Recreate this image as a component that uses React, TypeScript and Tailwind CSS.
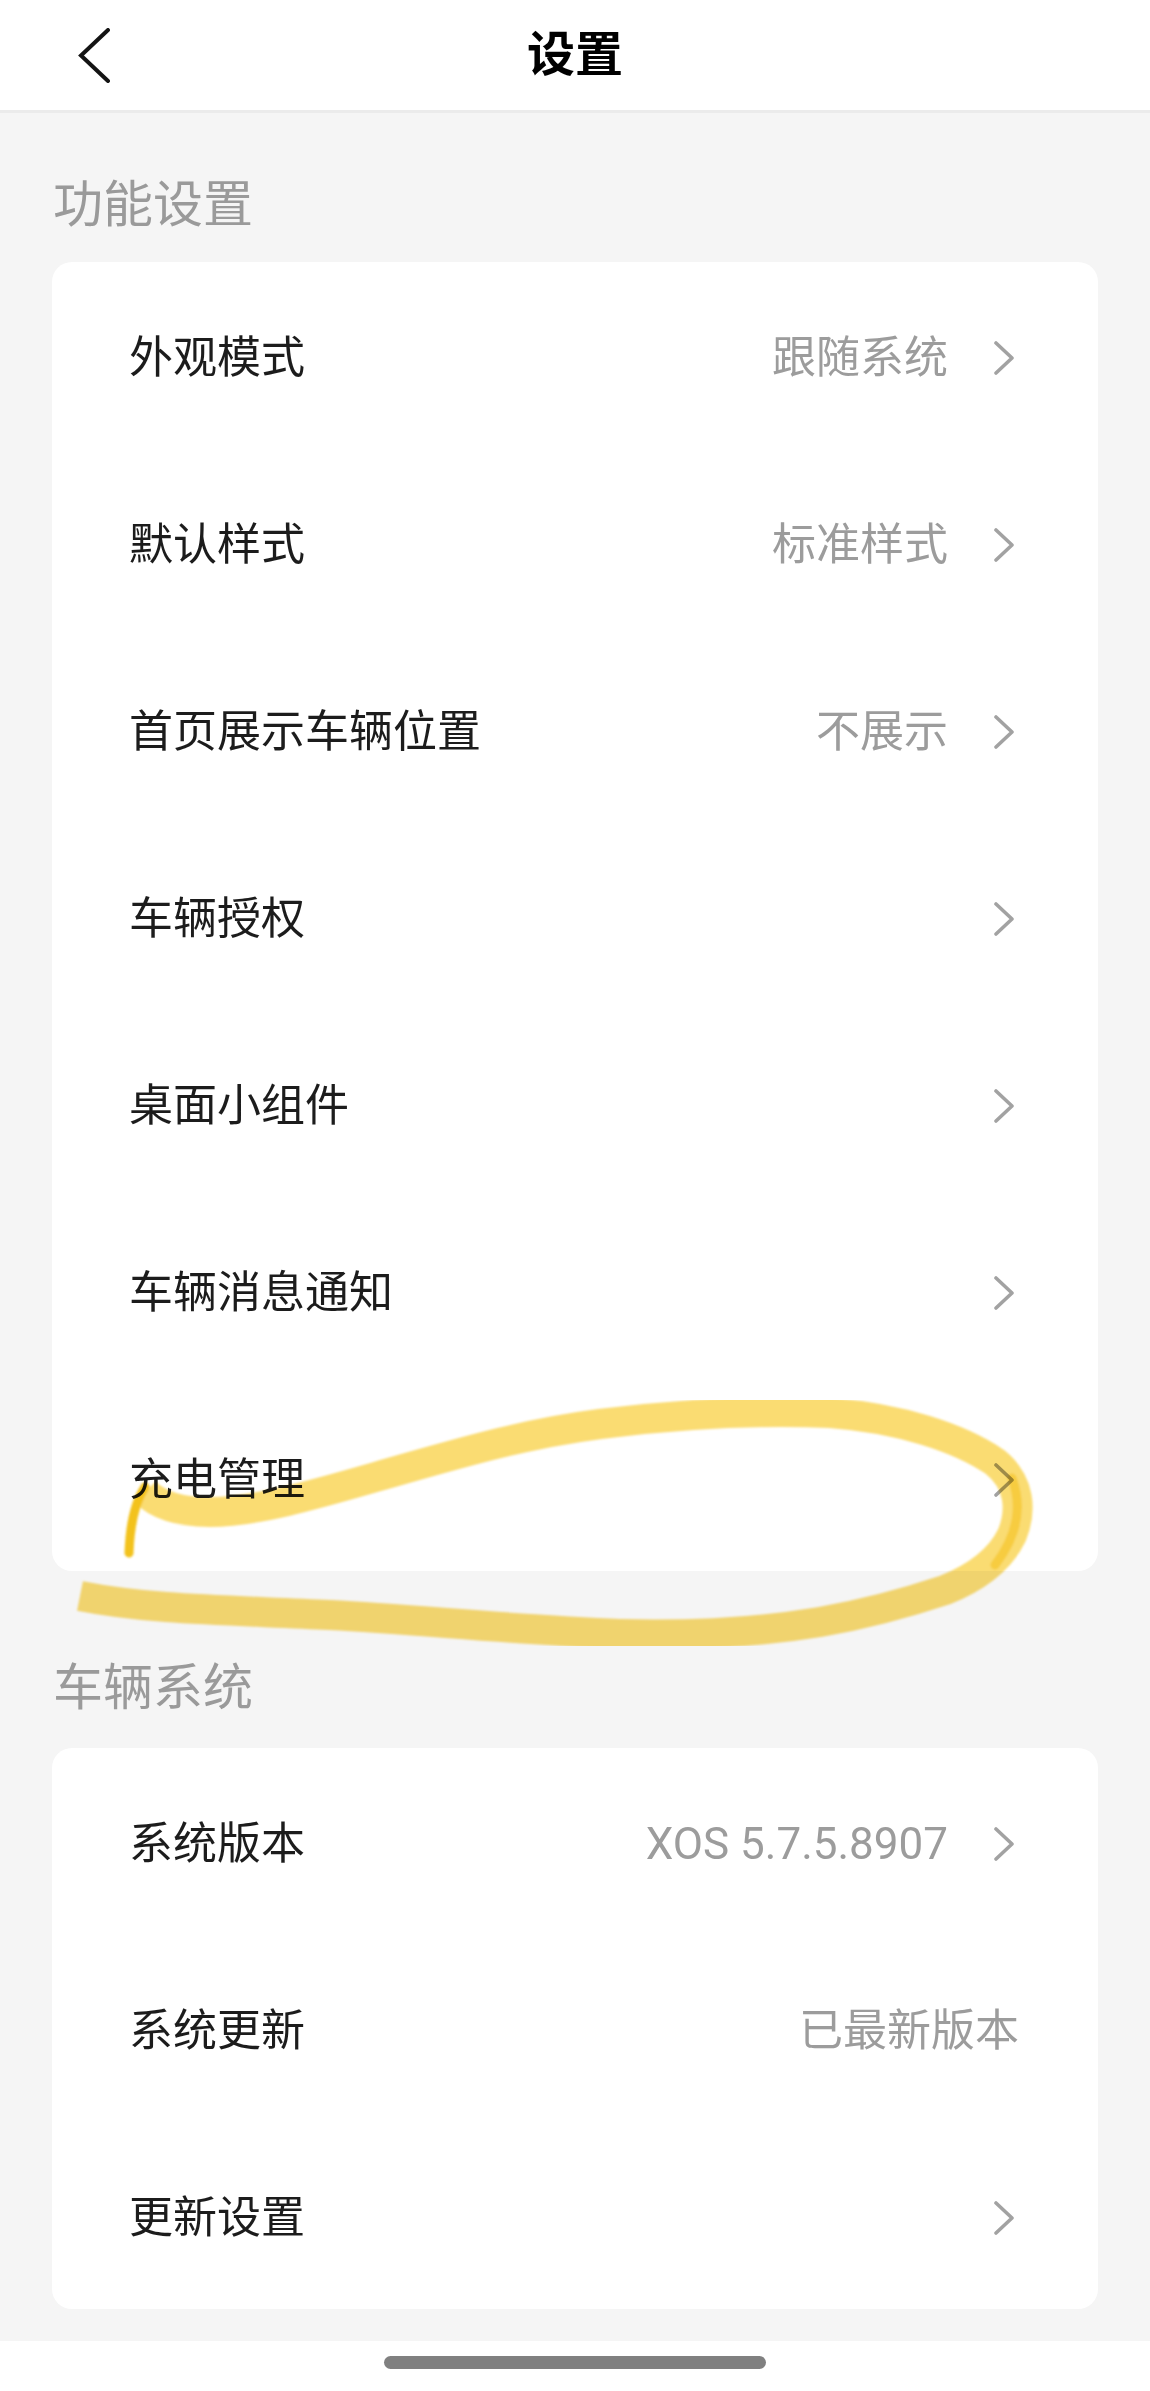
import React from 'react';

type Row = { label: string; value?: string; arrow?: boolean };

const featureRows: Row[] = [
  { label: '外观模式', value: '跟随系统', arrow: true },
  { label: '默认样式', value: '标准样式', arrow: true },
  { label: '首页展示车辆位置', value: '不展示', arrow: true },
  { label: '车辆授权', arrow: true },
  { label: '桌面小组件', arrow: true },
  { label: '车辆消息通知', arrow: true },
  { label: '充电管理', arrow: true },
];

const systemRows: Row[] = [
  { label: '系统版本', value: 'XOS 5.7.5.8907', arrow: true },
  { label: '系统更新', value: '已最新版本' },
  { label: '更新设置', arrow: true },
];

const Chevron = () => (
  <svg width="22" height="34" viewBox="0 0 22 34" className="ml-[45px] shrink-0">
    <path d="M3 2 L19 17 L3 32" fill="none" stroke="#a2a2a2" strokeWidth="3.6" strokeLinecap="round" strokeLinejoin="round" />
  </svg>
);

const SettingRow = ({ row }: { row: Row }) => (
  <div className="flex items-center h-[187px] pt-[5px] pl-[77px] pr-[83px]">
    <span className="flex-1 text-[44px] leading-[50px] text-[#1c1c1c]">{row.label}</span>
    {row.value && (
      <span className={`text-[44px] leading-[50px] text-[#9c9c9c] ${row.arrow ? '' : '-mr-[4px]'}`}>
        {row.value}
      </span>
    )}
    {row.arrow && <Chevron />}
  </div>
);

export default function App() {
  return (
    <div className="relative w-[1150px] min-h-[2391px] bg-[#f5f5f5] font-['Roboto','Noto_Sans_CJK_SC',sans-serif] flex flex-col">
      {/* Header */}
      <div className="h-[113px] bg-white border-b-[3px] border-[#ebebeb] grid grid-cols-3 items-center">
        <div className="pl-[77px] flex items-center">
          <svg width="34" height="55" viewBox="0 0 34 55">
            <path d="M31 2 L4 27.5 L31 53" fill="none" stroke="#141414" strokeWidth="4" strokeLinecap="round" strokeLinejoin="miter" />
          </svg>
        </div>
        <div className="text-center text-[48px] leading-[50px] font-bold text-black">设置</div>
        <div />
      </div>

      {/* 功能设置 */}
      <div className="pl-[53px] pt-[67px] pb-[32px] text-[50px] leading-[50px] text-[#9a9a9a]">功能设置</div>
      <div className="mx-[52px] bg-white rounded-[20px]">
        {featureRows.map((row) => (
          <SettingRow key={row.label} row={row} />
        ))}
      </div>

      {/* 车辆系统 */}
      <div className="pl-[53px] pt-[92px] pb-[35px] text-[50px] leading-[50px] text-[#9a9a9a]">车辆系统</div>
      <div className="mx-[52px] bg-white rounded-[20px]">
        {systemRows.map((row) => (
          <SettingRow key={row.label} row={row} />
        ))}
      </div>

      <div className="h-[32px]" />

      {/* home indicator */}
      <div className="h-[50px] bg-white flex justify-center pt-[15px]">
        <div className="w-[382px] h-[13px] rounded-full bg-[#808080]" />
      </div>

      {/* highlighter annotation */}
      <svg
        className="absolute top-0 left-0 pointer-events-none mix-blend-multiply"
        width="1150"
        height="2391"
        viewBox="0 0 1150 2391"
      >
        <defs>
          <filter id="soft" x="-5%" y="-5%" width="110%" height="110%">
            <feGaussianBlur stdDeviation="1.2" />
          </filter>
        </defs>
        <g filter="url(#soft)" fill="none" strokeLinejoin="round">
          <path
            d="M145 1492 C158 1505, 178 1512, 210 1512 C260 1512, 330 1490, 400 1470 C470 1450, 530 1433, 600 1424 C680 1414, 760 1410, 830 1413 C900 1418, 960 1438, 995 1462 C1020 1482, 1022 1510, 1012 1535 C1000 1560, 975 1578, 945 1590 C900 1605, 860 1615, 820 1622 C760 1632, 700 1636, 620 1634 C520 1630, 420 1620, 330 1615 C230 1610, 150 1610, 80 1596"
            stroke="#fadc72"
            strokeWidth="30"
            strokeLinecap="butt"
          />
          <path d="M1012 1478 C1022 1505, 1018 1535, 995 1565" stroke="#f5c52a" strokeWidth="9" opacity="0.7" strokeLinecap="round" />
          <path d="M129 1553 C130 1525, 135 1502, 145 1487" stroke="#f3c21c" strokeWidth="9" strokeLinecap="round" />
        </g>
      </svg>
    </div>
  );
}
